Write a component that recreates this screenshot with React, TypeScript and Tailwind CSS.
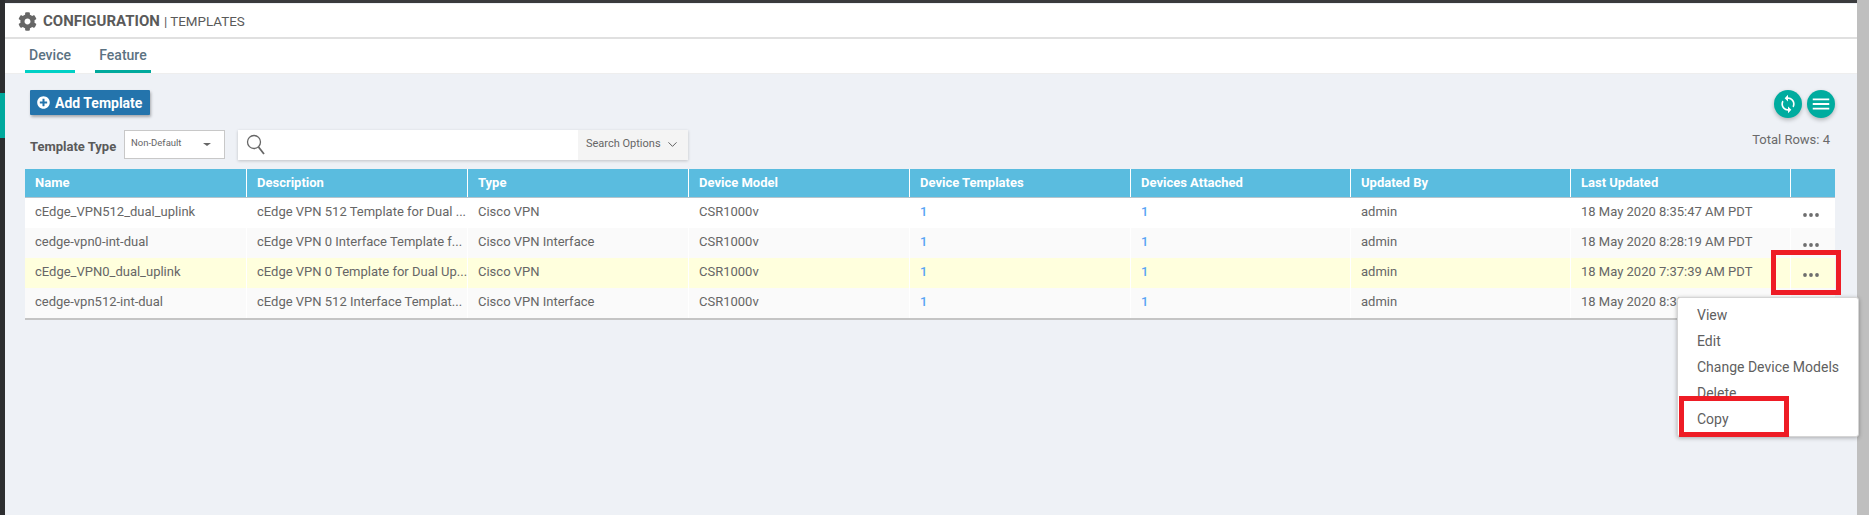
import React from "react";
import { FaCog, FaPlusCircle } from "react-icons/fa";
import { MdSync, MdMenu } from "react-icons/md";
import { ChevronDown } from "lucide-react";

const headers = ["Name", "Description", "Type", "Device Model", "Device Templates", "Devices Attached", "Updated By", "Last Updated", ""];
const rows = [
  { bg: "bg-white", name: "cEdge_VPN512_dual_uplink", desc: "cEdge VPN 512 Template for Dual ...", type: "Cisco VPN", time: "18 May 2020 8:35:47 AM PDT" },
  { bg: "bg-[#fafafa]", name: "cedge-vpn0-int-dual", desc: "cEdge VPN 0 Interface Template f...", type: "Cisco VPN Interface", time: "18 May 2020 8:28:19 AM PDT" },
  { bg: "bg-[#ffffdd]", name: "cEdge_VPN0_dual_uplink", desc: "cEdge VPN 0 Template for Dual Up...", type: "Cisco VPN", time: "18 May 2020 7:37:39 AM PDT" },
  { bg: "bg-[#fafafa]", name: "cedge-vpn512-int-dual", desc: "cEdge VPN 512 Interface Templat...", type: "Cisco VPN Interface", time: "18 May 2020 8:30:02 AM PDT" },
];
const cols = "grid grid-cols-[222px_221px_221px_221px_221px_220px_220px_220px_44px]";

function Dots() {
  return (
    <svg width="16" height="4" viewBox="0 0 16 4" className="fill-[#6e6e6e]">
      <circle cx="2" cy="2" r="1.9" />
      <circle cx="8" cy="2" r="1.9" />
      <circle cx="14" cy="2" r="1.9" />
    </svg>
  );
}

function SearchGlass() {
  return (
    <svg width="20" height="22" viewBox="0 0 20 22" fill="none" stroke="#666" className="ml-[8px] mt-[4px]">
      <circle cx="8" cy="8" r="6.5" strokeWidth="1.3" />
      <path d="M12.5 13 L18 20" strokeWidth="1.8" />
    </svg>
  );
}

function Cell({ children, className = "" }: { children?: React.ReactNode; className?: string }) {
  return <div className={`flex items-center pl-[10px] border-r border-white whitespace-nowrap overflow-hidden ${className}`}>{children}</div>;
}

export default function App() {
  return (
    <div className="relative w-[1869px] h-[515px] flex overflow-hidden bg-[#eef1f6] font-['Roboto',sans-serif] text-[13px] text-[#666]">
      <div className="w-[5px] shrink-0 bg-[#2d2e30] pt-[93px]">
        <div className="h-[45px] bg-[#00a99d]" />
      </div>
      <div className="flex-1 flex flex-col min-w-0">
        <div className="h-[3px] bg-[#3a3b3d] shrink-0" />
        <div className="h-[35px] shrink-0 mt-px bg-white border-b-2 border-[#e0e0e0] flex items-center pl-[13px] gap-[6px] pt-[2px]">
          <FaCog className="text-[#666] text-[19px]" />
          <span className="text-[#5a5a5a] text-[15px] font-bold leading-none">CONFIGURATION</span>
          <span className="text-[#5a5a5a] text-[13.4px] leading-none -ml-[2px]">| TEMPLATES</span>
        </div>
        <div className="h-[35px] shrink-0 bg-white border-b border-[#eeeeee] flex pl-[20px] gap-[20px]">
          <div className="w-[50px] h-[34px] flex flex-col items-center justify-between">
            <span className="text-[14px] font-medium text-[#5b7282] mt-[9px] leading-none">Device</span>
            <div className="w-full h-[3px] bg-[#00d0c6]" />
          </div>
          <div className="w-[56px] h-[34px] flex flex-col items-center justify-between">
            <span className="text-[14px] font-medium text-[#5b7282] mt-[9px] leading-none">Feature</span>
            <div className="w-full h-[3px] bg-[#00a99d]" />
          </div>
        </div>
        <div className="flex-1 pl-[20px] pr-[22px] relative">
          <div className="flex justify-between items-start pt-[16px] h-[56px] pl-[5px]">
            <button className="w-[120px] h-[25px] bg-[#2474ac] text-white font-bold text-[14px] rounded-[1px] shadow-[1px_2px_3px_rgba(0,0,0,0.3)] flex items-center pl-[7px] gap-[5px]">
              <FaPlusCircle className="text-[13px]" />
              <span className="leading-none">Add Template</span>
            </button>
            <div className="flex gap-[5px]">
              <div className="w-[28px] h-[28px] rounded-full bg-[#00ac9f] shadow-[0_2px_4px_rgba(0,0,0,0.25)] flex items-center justify-center text-white">
                <MdSync className="text-[20px]" />
              </div>
              <div className="w-[28px] h-[28px] rounded-full bg-[#00ac9f] shadow-[0_2px_4px_rgba(0,0,0,0.25)] flex items-center justify-center text-white">
                <MdMenu className="text-[22px]" />
              </div>
            </div>
          </div>
          <div className="flex items-start h-[39px] pl-[5px]">
            <span className="font-bold text-[#5a5a5a] text-[13px] mt-[9px] w-[94px] leading-[15px]">Template Type</span>
            <div className="w-[101px] h-[29px] bg-white border border-[#c8c8c8] flex items-center pl-[6px] text-[9.5px] pb-[2px]">
              <span>Non-Default</span>
              <span className="ml-[22px] w-0 h-0 border-x-[4px] border-x-transparent border-t-[3px] border-t-[#666] mt-[2px]" />
            </div>
            <div className="ml-[13px] w-[450px] h-[30px] bg-white shadow-[0_1px_3px_rgba(0,0,0,0.2)] flex justify-between">
              <SearchGlass />
              <div className="w-[110px] bg-[#f4f4f4] flex items-center pl-[8px] gap-[4px] text-[11px] pb-[1px]">
                <span>Search Options</span>
                <ChevronDown size={15} strokeWidth={1.5} className="text-[#555]" />
              </div>
            </div>
            <span className="ml-auto mt-[2px] mr-[5px] text-[13px] text-[#6a6a6a] leading-[15px]">Total Rows: 4</span>
          </div>
          <div className="border-b-2 border-[#c4c4c4] w-[1810px]">
            <div className={`${cols} h-[29px] bg-[#5abcdf] border-b-[1px] border-[#b5c4cc] text-white font-bold text-[13px]`}>
              {headers.map((h, i) => (
                <Cell key={i} className="last:border-r-0">{h}</Cell>
              ))}
            </div>
            {rows.map((r) => (
              <div key={r.name} className={`${cols} h-[30px] ${r.bg}`}>
                <Cell className="pb-[2px]">{r.name}</Cell>
                <Cell className="pb-[2px]">{r.desc}</Cell>
                <Cell className="pb-[2px]">{r.type}</Cell>
                <Cell className="pb-[2px]">CSR1000v</Cell>
                <Cell className="pb-[2px] text-[#5aa5f5] font-medium">1</Cell>
                <Cell className="pb-[2px] text-[#5aa5f5] font-medium">1</Cell>
                <Cell className="pb-[2px]">admin</Cell>
                <Cell className="pb-[2px]">{r.time}</Cell>
                <div className="flex justify-center items-center pt-[3px] pr-[4px]"><Dots /></div>
              </div>
            ))}
          </div>
        </div>
      </div>
      <div className="w-[12px] shrink-0 bg-[#bfbfbf]" />

      <div className="absolute left-[1677px] top-[297px] w-[182px] h-[140px] bg-white rounded-[3px] border border-[#d5d5d5] shadow-[0_1px_4px_rgba(0,0,0,0.3)] pt-[4px] text-[14px] text-[#5f5f5f]">
        {["View", "Edit", "Change Device Models", "Delete", "Copy"].map((m) => (
          <div key={m} className="h-[26px] flex items-center pl-[19px] leading-none">{m}</div>
        ))}
      </div>
      <div className="absolute left-[1771px] top-[250px] w-[70px] h-[45px] border-[5px] border-[#ee1c25]" />
      <div className="absolute left-[1679px] top-[396px] w-[110px] h-[41px] border-[5px] border-[#ee1c25]" />
    </div>
  );
}
